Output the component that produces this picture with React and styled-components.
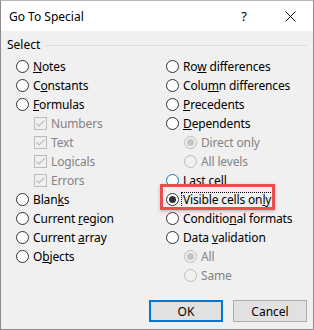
import React from "react";
import styled, { createGlobalStyle } from "styled-components";

const Global = createGlobalStyle`
	html, body {
		margin: 0;
		padding: 0;
		background: #ffffff;
	}
	* {
		box-sizing: border-box;
	}
`;

const leftColumn = [
	{ label: "Notes", key: 0, type: "radio" },
	{ label: "Constants", key: 1, type: "radio" },
	{ label: "Formulas", key: 0, type: "radio" },
	{ label: "Numbers", type: "check", sub: true, disabled: true },
	{ label: "Text", type: "check", sub: true, disabled: true },
	{ label: "Logicals", type: "check", sub: true, disabled: true },
	{ label: "Errors", type: "check", sub: true, disabled: true },
	{ label: "Blanks", key: 4, type: "radio" },
	{ label: "Current region", key: 8, type: "radio" },
	{ label: "Current array", key: 8, type: "radio" },
	{ label: "Objects", key: 1, type: "radio" },
];

const rightColumn = [
	{ label: "Row differences", key: 2, type: "radio" },
	{ label: "Column differences", key: 4, type: "radio" },
	{ label: "Precedents", key: 0, type: "radio" },
	{ label: "Dependents", key: 0, type: "radio" },
	{ label: "Direct only", type: "radio", sub: true, disabled: true, checked: true },
	{ label: "All levels", type: "radio", sub: true, disabled: true },
	{ label: "Last cell", key: 2, type: "radio", hover: true },
	{ label: "Visible cells only", key: 16, type: "radio", checked: true, focus: true },
	{ label: "Conditional formats", key: 8, type: "radio" },
	{ label: "Data validation", key: 5, type: "radio" },
	{ label: "All", type: "radio", sub: true, disabled: true, checked: true },
	{ label: "Same", type: "radio", sub: true, disabled: true },
];

function Mnemonic({ text, at }) {
	if (at === undefined) return text;
	return (
		<>
			{text.slice(0, at)}
			<Key>{text[at]}</Key>
			{text.slice(at + 1)}
		</>
	);
}

function Option({ item }) {
	return (
		<Row $sub={item.sub}>
			{item.type === "radio" ? (
				<RadioDot $checked={item.checked} $disabled={item.disabled} $hover={item.hover} />
			) : (
				<CheckBox>
					<svg width="11" height="11" viewBox="0 0 11 11">
						<polyline points="1.5,5.5 4,8 9.5,2.5" fill="none" stroke="#bcbcbc" strokeWidth="1.1" />
					</svg>
				</CheckBox>
			)}
			<Label $disabled={item.disabled} $focus={item.focus}>
				<Mnemonic text={item.label} at={item.key} />
			</Label>
			{item.focus && <Highlight />}
		</Row>
	);
}

export default function App() {
	return (
		<Dialog>
			<Global />
			<TitleBar>
				<Title>Go To Special</Title>
				<Help>?</Help>
				<Close>
					<svg width="11" height="11" viewBox="0 0 11 11">
						<path d="M0.5 0.5 L10.5 10.5 M10.5 0.5 L0.5 10.5" stroke="#111" strokeWidth="1" />
					</svg>
				</Close>
			</TitleBar>
			<Body>
				<GroupHeader>
					<span>Select</span>
					<Rule />
				</GroupHeader>
				<Columns>
					<Column>
						{leftColumn.map((item) => (
							<Option key={item.label} item={item} />
						))}
					</Column>
					<Column>
						{rightColumn.map((item) => (
							<Option key={item.label} item={item} />
						))}
					</Column>
				</Columns>
				<Buttons>
					<Button $default>OK</Button>
					<Button>Cancel</Button>
				</Buttons>
			</Body>
		</Dialog>
	);
}

const Dialog = styled.div`
	width: 314px;
	height: 330px;
	display: flex;
	flex-direction: column;
	border: 1px solid #8c8c8c;
	border-top-color: #b8b8b8;
	background: #f0f0f0;
	font-family: "Noto Sans", "Segoe UI", sans-serif;
	font-size: 12px;
	color: #000;
`;

const TitleBar = styled.div`
	height: 30px;
	flex: none;
	display: flex;
	align-items: center;
	background: #ffffff;
	padding-left: 8px;
`;

const Title = styled.div`
	flex: 1;
	font-size: 12px;
	padding-top: 1px;
`;

const Help = styled.div`
	width: 46px;
	text-align: center;
	font-size: 13px;
	margin-left: 4px;
`;

const Close = styled.div`
	width: 46px;
	height: 30px;
	display: flex;
	align-items: center;
	justify-content: center;
`;

const Body = styled.div`
	flex: 1;
	display: flex;
	flex-direction: column;
	padding: 6px 6px 7px 6px;
`;

const GroupHeader = styled.div`
	display: flex;
	align-items: center;
	gap: 5px;
	height: 16px;
	line-height: 16px;
`;

const Rule = styled.div`
	flex: 1;
	height: 1px;
	background: #dcdcdc;
`;

const Columns = styled.div`
	display: grid;
	grid-template-columns: 150px 1fr;
	padding: 4px 0 0 9px;
`;

const Column = styled.div`
	display: flex;
	flex-direction: column;
`;

const Row = styled.div`
	position: relative;
	height: 19px;
	display: flex;
	align-items: center;
	gap: 4px;
	padding-left: ${(p) => (p.$sub ? "18px" : "0")};
`;

const RadioDot = styled.span`
	flex: none;
	width: 13px;
	height: 13px;
	border-radius: 50%;
	display: flex;
	align-items: center;
	justify-content: center;
	background: ${(p) => (p.$disabled ? "#f0f0f0" : "#ffffff")};
	border: 1px solid ${(p) => (p.$disabled ? "#bcbcbc" : p.$hover ? "#0078d7" : "#333333")};

	&::after {
		content: "";
		display: ${(p) => (p.$checked ? "block" : "none")};
		width: 7px;
		height: 7px;
		border-radius: 50%;
		background: ${(p) => (p.$disabled ? "#c4c4c4" : "#333333")};
	}
`;

const CheckBox = styled.span`
	flex: none;
	width: 13px;
	height: 13px;
	border: 1px solid #bcbcbc;
	background: #f0f0f0;
	display: flex;
	align-items: center;
	justify-content: center;
`;

const Label = styled.span`
	white-space: nowrap;
	color: ${(p) => (p.$disabled ? "#838383" : "#000")};
	line-height: 14px;
	letter-spacing: -0.15px;
	padding: 0 1px;
	margin-left: -1px;
	outline: ${(p) => (p.$focus ? "1px dotted #000" : "none")};
`;

const Key = styled.span`
	text-decoration: underline;
	text-underline-offset: 1px;
`;

const Highlight = styled.div`
	position: absolute;
	left: -6px;
	top: -6px;
	width: 115px;
	height: 26px;
	border: 3px solid #ec4d4d;
	box-shadow: 0 1px 3px rgba(0, 0, 0, 0.25);
	pointer-events: none;
`;

const Buttons = styled.div`
	margin-top: auto;
	display: flex;
	justify-content: flex-end;
	gap: 10px;
`;

const Button = styled.button`
	width: 74px;
	height: 22px;
	padding: 0;
	font-family: inherit;
	font-size: 12px;
	color: #000;
	background: #e1e1e1;
	border: ${(p) => (p.$default ? "2px solid #0078d7" : "1px solid #adadad")};
`;
